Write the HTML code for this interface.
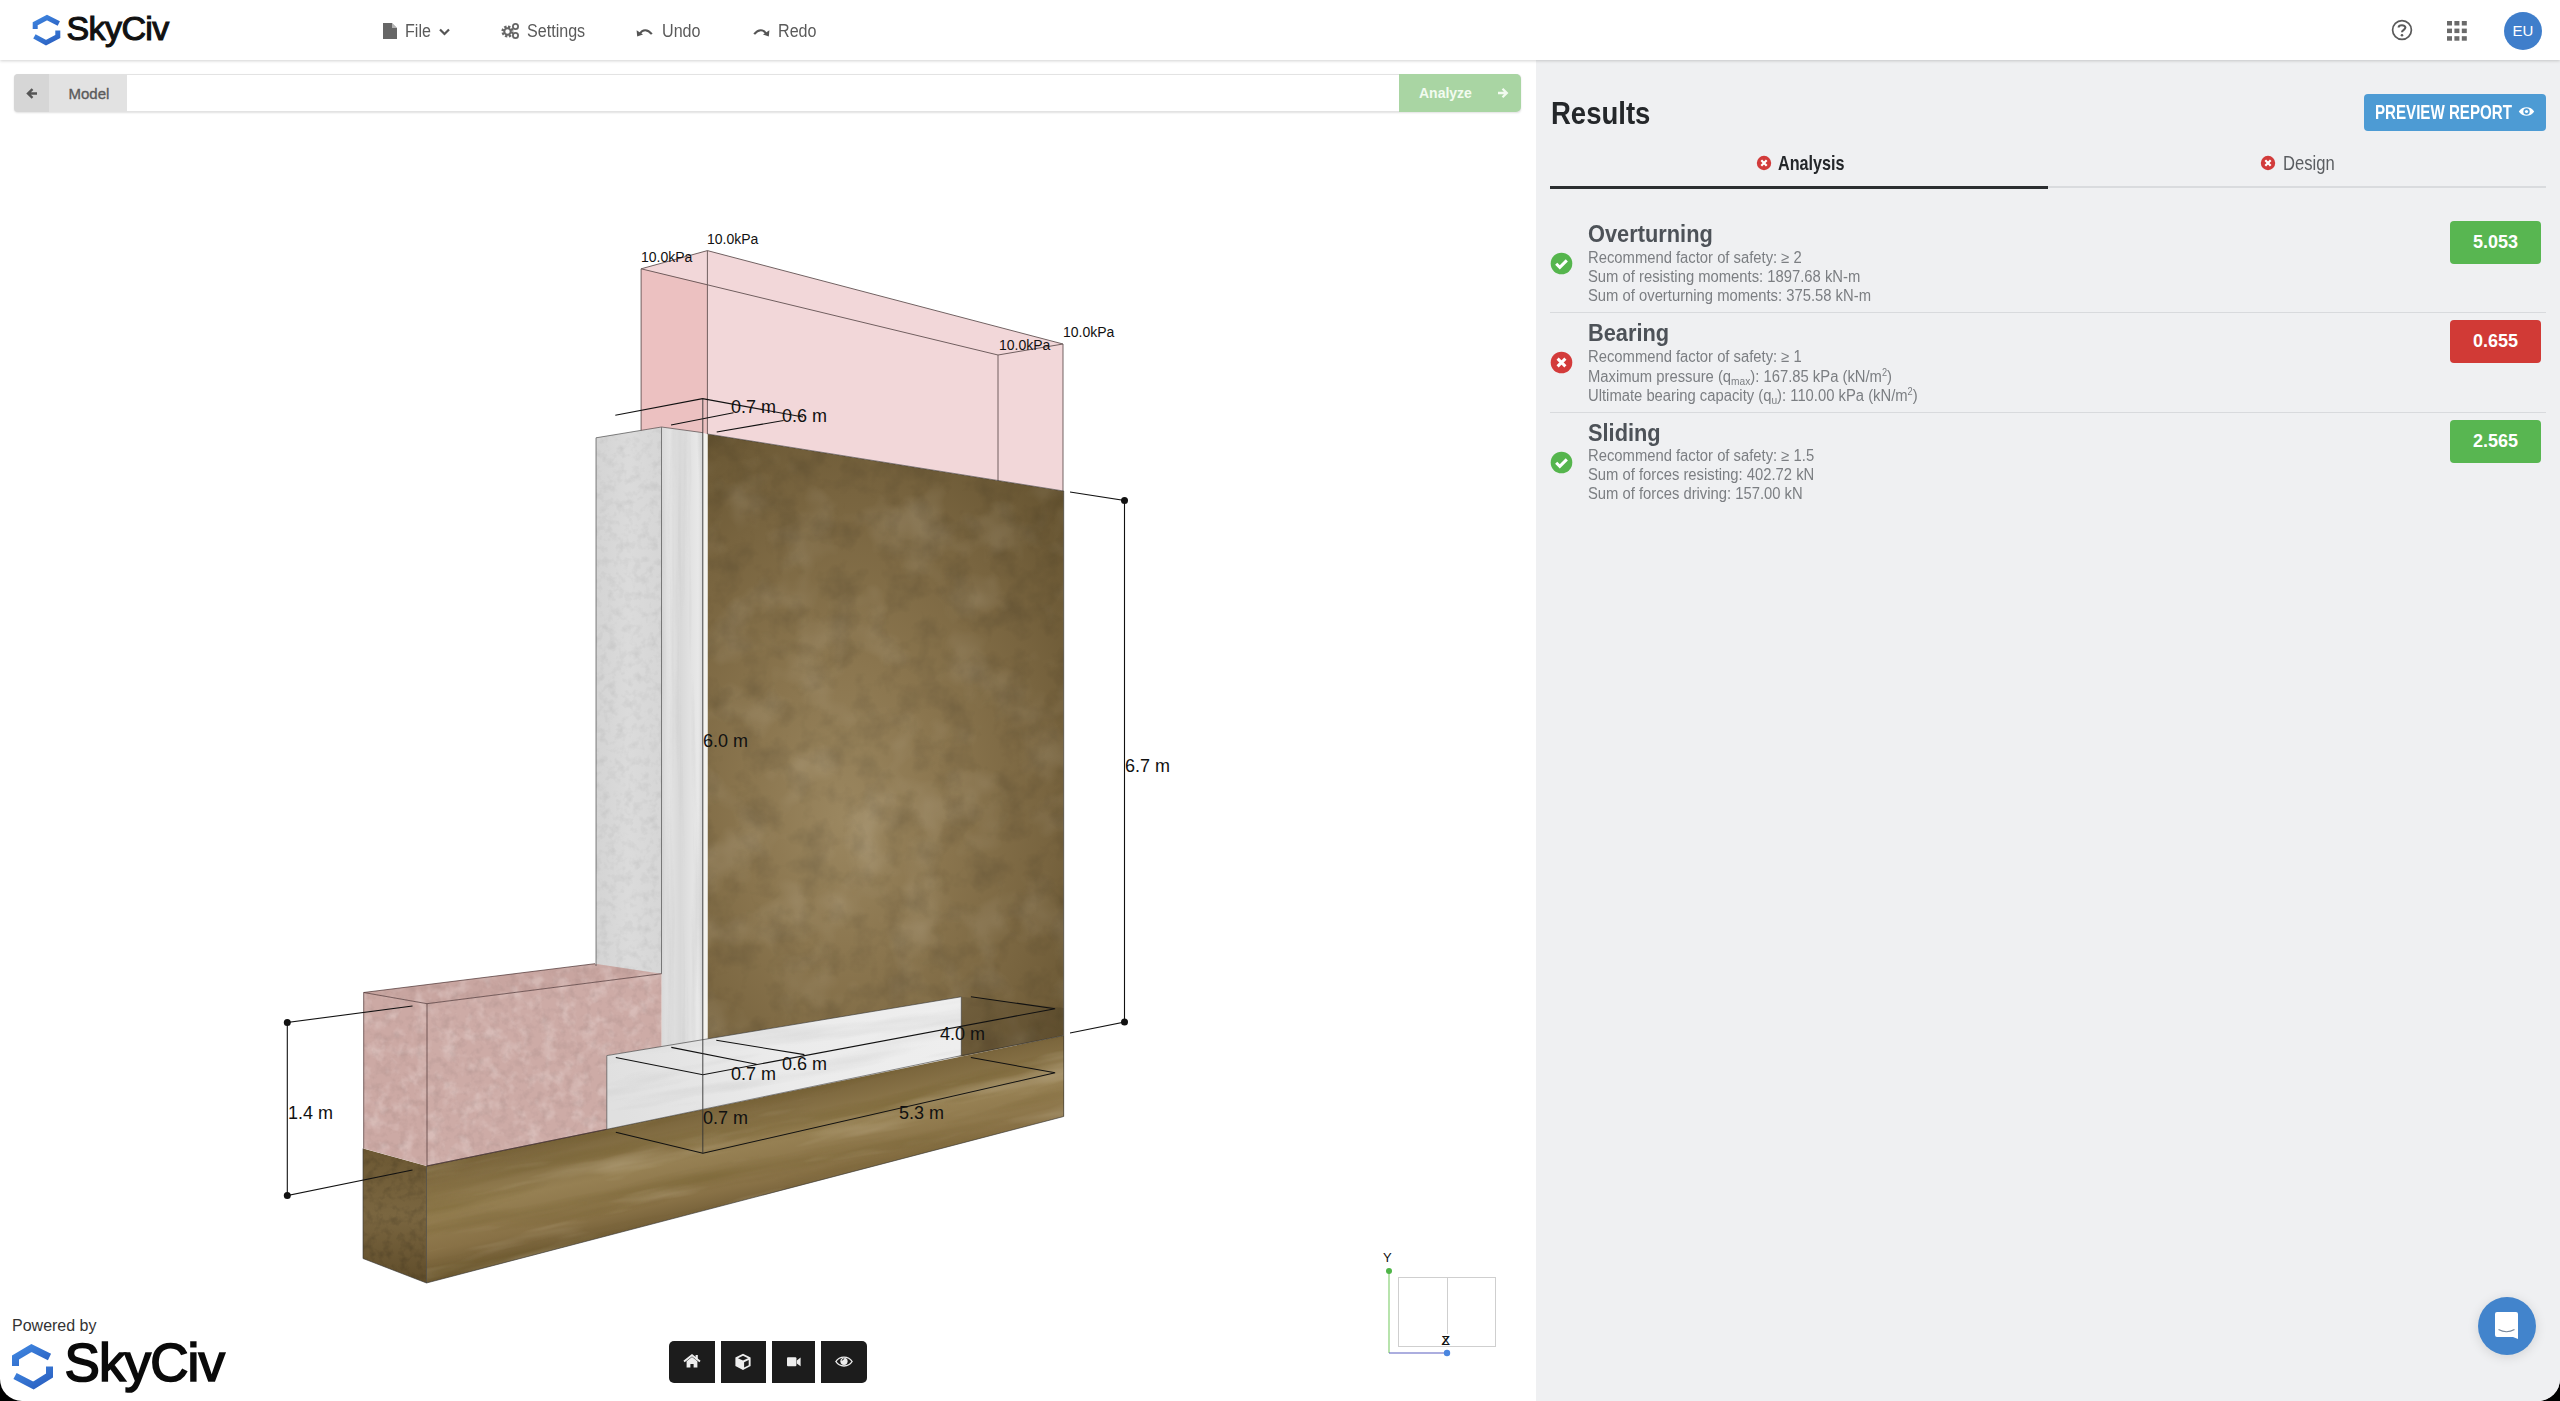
<!DOCTYPE html>
<html><head><meta charset="utf-8">
<style>
*{margin:0;padding:0;box-sizing:border-box}
html,body{width:2560px;height:1401px;overflow:hidden;background:#000}
body{font-family:"Liberation Sans",sans-serif;position:relative}
#app{position:absolute;left:0;top:0;width:2560px;height:1401px;background:linear-gradient(90deg,#fff 1536px,#eff0f2 1536px);border-radius:0 0 22px 22px;overflow:hidden}
.a{position:absolute;white-space:nowrap;line-height:1}
#hdr{position:absolute;left:0;top:0;width:2560px;height:60px;background:#fff;box-shadow:0 1px 3px rgba(0,0,0,.18);z-index:5}
#right{position:absolute;left:1536px;top:60px;width:1024px;height:1341px;background:#eff0f2}
.nav{color:#5a5a5a;font-size:17.5px;transform-origin:0 0;transform:scaleX(0.92)}
.ln{color:#7b7e82;font-size:16px;transform-origin:0 0;transform:scaleX(0.925)}
.ttl{color:#4d5258;font-size:24.5px;font-weight:bold;transform-origin:0 0;transform:scaleX(0.89)}
.badge{position:absolute;left:2450px;width:91px;height:43px;border-radius:4px;color:#fff;font-weight:bold;font-size:18px;text-align:center;line-height:43px}
.sep{position:absolute;left:1550px;width:996px;height:1px;background:#d8dadd}
.sx{transform-origin:0 0}
.tb{position:absolute;top:1341px;height:42px;background:#1c1c1c}
</style></head><body>
<div id="app">

<!-- HEADER -->
<div id="hdr">
  <svg class="a" style="left:30px;top:13px" width="34" height="36" viewBox="30 13 34 36">
    <defs><linearGradient id="lg1" x1="0" y1="0" x2="1" y2="1"><stop offset="0" stop-color="#3f86e0"/><stop offset="1" stop-color="#2a5fc0"/></linearGradient></defs>
    <path d="M35.2,29 V23.8 L47,17.6 L58.8,23.6" fill="none" stroke="url(#lg1)" stroke-width="5"/>
    <path d="M57.8,30.5 V36.4 L46,42.6 L34.4,36.4" fill="none" stroke="url(#lg1)" stroke-width="5"/>
  </svg>
  <div class="a" style="left:66.5px;top:10.5px;font-size:34px;font-weight:normal;color:#111;-webkit-text-stroke:1.1px #111;letter-spacing:-0.6px">SkyCiv</div>

  <svg class="a" style="left:383px;top:23px" width="15" height="16" viewBox="0 0 15 16"><path d="M0,0 H9 L14,5 V16 H0 Z" fill="#666"/><path d="M9,0 V5 H14" fill="#fff" opacity=".5"/></svg>
  <div class="a nav" style="left:405px;top:22.5px">File</div>
  <svg class="a" style="left:439px;top:28px" width="11" height="8" viewBox="0 0 11 8"><path d="M1,1.5 L5.5,6 L10,1.5" fill="none" stroke="#555" stroke-width="2.2"/></svg>

  <svg class="a" style="left:501px;top:22px" width="19" height="17" viewBox="0 0 19 17">
    <circle cx="6.5" cy="9.5" r="4.6" fill="none" stroke="#666" stroke-width="3" stroke-dasharray="2.2 1.4"/>
    <circle cx="6.5" cy="9.5" r="3.2" fill="none" stroke="#666" stroke-width="2"/>
    <circle cx="14.5" cy="4.5" r="2.6" fill="none" stroke="#666" stroke-width="1.8"/>
    <circle cx="14.5" cy="13.5" r="2.6" fill="none" stroke="#666" stroke-width="1.8"/>
  </svg>
  <div class="a nav" style="left:527px;top:22.5px">Settings</div>

  <svg class="a" style="left:636px;top:26px" width="17" height="11" viewBox="0 0 17 11"><path d="M3.6,8 C6.5,3.2 11.5,2.8 15.8,8.2" fill="none" stroke="#555" stroke-width="2.1"/><path d="M0.6,4.2 L1.2,10.4 L7,8.6 Z" fill="#555"/></svg>
  <div class="a nav" style="left:662px;top:22.5px">Undo</div>
  <svg class="a" style="left:753px;top:26px" width="17" height="11" viewBox="0 0 17 11"><path d="M13.4,8 C10.5,3.2 5.5,2.8 1.2,8.2" fill="none" stroke="#555" stroke-width="2.1"/><path d="M16.4,4.2 L15.8,10.4 L10,8.6 Z" fill="#555"/></svg>
  <div class="a nav" style="left:778px;top:22.5px">Redo</div>

  <svg class="a" style="left:2391px;top:19px" width="22" height="22" viewBox="0 0 22 22"><circle cx="11" cy="11" r="9.4" fill="none" stroke="#5a5a5a" stroke-width="1.7"/><path d="M7.6,8.6 C7.6,5.4 14.4,5.4 14.4,8.6 C14.4,10.8 11,10.8 11,13.2" fill="none" stroke="#5a5a5a" stroke-width="2.1"/><circle cx="11" cy="16.2" r="1.3" fill="#5a5a5a"/></svg>
  <svg class="a" style="left:2447px;top:21px" width="20" height="20" viewBox="0 0 20 20" fill="#6a6a6a">
    <rect x="0" y="0" width="5" height="4.5"/><rect x="7.4" y="0" width="5" height="4.5"/><rect x="14.8" y="0" width="5" height="4.5"/>
    <rect x="0" y="7.6" width="5" height="4.5"/><rect x="7.4" y="7.6" width="5" height="4.5"/><rect x="14.8" y="7.6" width="5" height="4.5"/>
    <rect x="0" y="15.2" width="5" height="4.5"/><rect x="7.4" y="15.2" width="5" height="4.5"/><rect x="14.8" y="15.2" width="5" height="4.5"/>
  </svg>
  <div class="a" style="left:2504px;top:11.5px;width:38px;height:38px;border-radius:50%;background:#3f7ecb"></div>
  <div class="a" style="left:2504px;top:23px;width:38px;text-align:center;color:#fff;font-size:15px">EU</div>
</div>

<!-- MODEL BAR -->
<div class="a" style="left:14px;top:74px;width:1507px;height:38px;background:#fff;border:1px solid #e3e3e3;border-radius:4px;box-shadow:0 1px 2px rgba(0,0,0,.12)"></div>
<div class="a" style="left:14px;top:74px;width:35px;height:38px;background:#d6d6d6;border-radius:4px 0 0 4px"></div>
<div class="a" style="left:49px;top:74px;width:78px;height:38px;background:#e2e2e2"></div>
<svg class="a" style="left:26px;top:88px" width="12" height="11" viewBox="0 0 12 11"><path d="M11,5.5 H2.5 M6.5,1.2 L2,5.5 L6.5,9.8" fill="none" stroke="#555" stroke-width="2.4"/></svg>
<div class="a" style="left:68.5px;top:86px;font-size:15px;font-weight:normal;color:#5b5b5b;-webkit-text-stroke:0.35px #5b5b5b">Model</div>
<div class="a" style="left:1399px;top:74px;width:122px;height:38px;background:#a9d5a3;border-radius:0 5px 5px 0"></div>
<div class="a" style="left:1419px;top:86px;font-size:14px;font-weight:bold;color:#f2fbf0">Analyze</div>
<svg class="a" style="left:1497px;top:87px" width="12" height="12" viewBox="0 0 12 12"><path d="M1,6 H9.5 M5.5,1.8 L9.8,6 L5.5,10.2" fill="none" stroke="#f2fbf0" stroke-width="2.3"/></svg>

<!-- RIGHT PANEL -->
<div id="right"></div>
<div class="a sx" style="left:1551px;top:96.5px;font-size:32px;color:#24272a;font-weight:bold;transform:scaleX(0.86)">Results</div>
<div class="a" style="left:2364px;top:94px;width:182px;height:37px;background:#4d9bd4;border-radius:4px"></div>
<div class="a sx" style="left:2375px;top:103px;font-size:19.5px;font-weight:bold;color:#fff;transform:scaleX(0.775)">PREVIEW REPORT</div>
<svg class="a" style="left:2518px;top:105px" width="17" height="13" viewBox="0 0 17 13"><path d="M0.8,6.5 C4,0.8 13,0.8 16.2,6.5 C13,12.2 4,12.2 0.8,6.5 Z" fill="#fff"/><circle cx="8.5" cy="6.5" r="3.2" fill="#4d9bd4"/><circle cx="8.5" cy="6.5" r="1.6" fill="#fff"/></svg>

<svg class="a" style="left:1756px;top:155px" width="16" height="16" viewBox="0 0 16 16"><circle cx="8" cy="8" r="7.2" fill="#d23b3b"/><path d="M5.3,5.3 L10.7,10.7 M10.7,5.3 L5.3,10.7" stroke="#fff" stroke-width="2.2"/></svg>
<div class="a sx" style="left:1778px;top:153px;font-size:20.5px;font-weight:bold;color:#24272a;transform:scaleX(0.79)">Analysis</div>
<svg class="a" style="left:2260px;top:155px" width="16" height="16" viewBox="0 0 16 16"><circle cx="8" cy="8" r="7.2" fill="#d23b3b"/><path d="M5.3,5.3 L10.7,10.7 M10.7,5.3 L5.3,10.7" stroke="#fff" stroke-width="2.2"/></svg>
<div class="a sx" style="left:2283px;top:153px;font-size:20.5px;color:#5a5d61;transform:scaleX(0.81)">Design</div>
<div class="a" style="left:1550px;top:186px;width:498px;height:3px;background:#2b2e31"></div>
<div class="a" style="left:2048px;top:186px;width:498px;height:2px;background:#d9dbde"></div>

<!-- item 1 -->
<svg class="a" style="left:1550px;top:252px" width="23" height="23" viewBox="0 0 23 23"><circle cx="11.5" cy="11.5" r="10.8" fill="#55b54d"/><path d="M6.2,11.8 L9.8,15.4 L16.8,8.4" fill="none" stroke="#fff" stroke-width="3"/></svg>
<div class="a ttl" style="left:1588px;top:222px">Overturning</div>
<div class="a ln" style="left:1588px;top:249.5px">Recommend factor of safety: ≥ 2</div>
<div class="a ln" style="left:1588px;top:268.7px">Sum of resisting moments: 1897.68 kN-m</div>
<div class="a ln" style="left:1588px;top:287.5px">Sum of overturning moments: 375.58 kN-m</div>
<div class="badge" style="top:221px;background:#58b651">5.053</div>
<div class="sep" style="top:312px"></div>

<!-- item 2 -->
<svg class="a" style="left:1550px;top:351px" width="23" height="23" viewBox="0 0 23 23"><circle cx="11.5" cy="11.5" r="10.8" fill="#d33b3b"/><path d="M7.6,7.6 L15.4,15.4 M15.4,7.6 L7.6,15.4" stroke="#fff" stroke-width="3"/></svg>
<div class="a ttl" style="left:1588px;top:321px">Bearing</div>
<div class="a ln" style="left:1588px;top:348.7px">Recommend factor of safety: ≥ 1</div>
<div class="a ln" style="left:1588px;top:367.9px">Maximum pressure (q<sub style="font-size:11px;vertical-align:-3px">max</sub>): 167.85 kPa (kN/m<sup style="font-size:10px;vertical-align:6px">2</sup>)</div>
<div class="a ln" style="left:1588px;top:386.7px">Ultimate bearing capacity (q<sub style="font-size:11px;vertical-align:-3px">u</sub>): 110.00 kPa (kN/m<sup style="font-size:10px;vertical-align:6px">2</sup>)</div>
<div class="badge" style="top:320px;background:#d13a36">0.655</div>
<div class="sep" style="top:412px"></div>

<!-- item 3 -->
<svg class="a" style="left:1550px;top:451px" width="23" height="23" viewBox="0 0 23 23"><circle cx="11.5" cy="11.5" r="10.8" fill="#55b54d"/><path d="M6.2,11.8 L9.8,15.4 L16.8,8.4" fill="none" stroke="#fff" stroke-width="3"/></svg>
<div class="a ttl" style="left:1588px;top:421px">Sliding</div>
<div class="a ln" style="left:1588px;top:447.9px">Recommend factor of safety: ≥ 1.5</div>
<div class="a ln" style="left:1588px;top:466.7px">Sum of forces resisting: 402.72 kN</div>
<div class="a ln" style="left:1588px;top:485.5px">Sum of forces driving: 157.00 kN</div>
<div class="badge" style="top:420px;background:#58b651">2.565</div>

<!-- chat -->
<div class="a" style="left:2478px;top:1297px;width:58px;height:58px;border-radius:50%;background:#4284cc;box-shadow:0 2px 12px rgba(0,0,0,.12)"></div>
<svg class="a" style="left:2494px;top:1311px" width="26" height="30" viewBox="0 0 26 30"><path d="M3,1 H22 Q24,1 24,3 V28 L19,26 H3 Q1,26 1,24 V3 Q1,1 3,1 Z" fill="#fff"/><path d="M4.5,18.5 Q12.5,23 20.5,18.5" fill="none" stroke="#7b8a9c" stroke-width="1.2"/></svg>

<!-- SCENE -->
<svg id="scene" class="a" style="left:0;top:0" width="1536" height="1401" viewBox="0 0 1536 1401">
 <defs>
  <filter id="nDark" x="0" y="0" width="100%" height="100%" filterUnits="objectBoundingBox">
   <feTurbulence type="fractalNoise" baseFrequency="0.035" numOctaves="4" seed="7" result="n"/>
   <feColorMatrix in="n" type="matrix" values="0 0 0 0 0  0 0 0 0 0  0 0 0 0 0  0 0 0 -2.2 1.25" result="a"/>
   <feComposite in="a" in2="SourceGraphic" operator="in"/>
  </filter>
  <filter id="nLight" x="0" y="0" width="100%" height="100%" filterUnits="objectBoundingBox">
   <feTurbulence type="fractalNoise" baseFrequency="0.018" numOctaves="3" seed="21" result="n"/>
   <feColorMatrix in="n" type="matrix" values="0 0 0 0 1  0 0 0 0 0.95  0 0 0 0 0.85  0 0 0 2.6 -1.25" result="a"/>
   <feComposite in="a" in2="SourceGraphic" operator="in"/>
  </filter>
  <filter id="nFine" x="0" y="0" width="100%" height="100%" filterUnits="objectBoundingBox">
   <feTurbulence type="fractalNoise" baseFrequency="0.12" numOctaves="3" seed="4" result="n"/>
   <feColorMatrix in="n" type="matrix" values="0 0 0 0 0  0 0 0 0 0  0 0 0 0 0  0 0 0 -1.8 1.0" result="a"/>
   <feComposite in="a" in2="SourceGraphic" operator="in"/>
  </filter>
  <filter id="nPinkL" x="0" y="0" width="100%" height="100%" filterUnits="objectBoundingBox">
   <feTurbulence type="fractalNoise" baseFrequency="0.07" numOctaves="3" seed="9" result="n"/>
   <feColorMatrix in="n" type="matrix" values="0 0 0 0 1  0 0 0 0 0.96  0 0 0 0 0.95  0 0 0 3 -1.4" result="a"/>
   <feComposite in="a" in2="SourceGraphic" operator="in"/>
  </filter>
  <filter id="nStreak" x="-50%" y="-50%" width="200%" height="200%" filterUnits="objectBoundingBox">
   <feTurbulence type="fractalNoise" baseFrequency="0.004 0.05" numOctaves="4" seed="13" result="n"/>
   <feColorMatrix in="n" type="matrix" values="0 0 0 0 0.15  0 0 0 0 0.1  0 0 0 0 0.02  0 0 0 -2.4 1.3" result="a"/>
   <feComposite in="a" in2="SourceGraphic" operator="in"/>
  </filter>
  <filter id="nStreakL" x="-50%" y="-50%" width="200%" height="200%" filterUnits="objectBoundingBox">
   <feTurbulence type="fractalNoise" baseFrequency="0.005 0.04" numOctaves="4" seed="31" result="n"/>
   <feColorMatrix in="n" type="matrix" values="0 0 0 0 1  0 0 0 0 0.92  0 0 0 0 0.75  0 0 0 2.6 -1.35" result="a"/>
   <feComposite in="a" in2="SourceGraphic" operator="in"/>
  </filter>
  <filter id="nGreyStreak" x="-50%" y="-50%" width="200%" height="200%" filterUnits="objectBoundingBox">
   <feTurbulence type="fractalNoise" baseFrequency="0.006 0.06" numOctaves="3" seed="17" result="n"/>
   <feColorMatrix in="n" type="matrix" values="0 0 0 0 0.4  0 0 0 0 0.4  0 0 0 0 0.4  0 0 0 -2.6 1.35" result="a"/>
   <feComposite in="a" in2="SourceGraphic" operator="in"/>
  </filter>
  <filter id="nGreyStreakV" x="-50%" y="-50%" width="200%" height="200%" filterUnits="objectBoundingBox">
   <feTurbulence type="fractalNoise" baseFrequency="0.12 0.004" numOctaves="3" seed="23" result="n"/>
   <feColorMatrix in="n" type="matrix" values="0 0 0 0 0.4  0 0 0 0 0.4  0 0 0 0 0.4  0 0 0 -2.6 1.35" result="a"/>
   <feComposite in="a" in2="SourceGraphic" operator="in"/>
  </filter>
  <clipPath id="cpFoot"><polygon points="606.8,1055.6 961.3,996.8 961.3,1055.6 606.8,1129.3"/></clipPath>
  <clipPath id="cpStemF"><polygon points="661.5,427 703,432.7 703,1040 661.5,1047"/></clipPath>
  <clipPath id="cpBase"><polygon points="426.5,1166 1064,1035.5 1064,1116.5 426.5,1283"/></clipPath>
  <radialGradient id="gSoil" gradientUnits="userSpaceOnUse" cx="850" cy="790" r="440" fx="840" fy="820" gradientTransform="translate(850 790) scale(0.66 1) translate(-850 -790)">
   <stop offset="0" stop-color="#9b8760"/>
   <stop offset="0.35" stop-color="#8a754e"/>
   <stop offset="0.7" stop-color="#78643f"/>
   <stop offset="1" stop-color="#655330"/>
  </radialGradient>
  <linearGradient id="gBase" gradientUnits="userSpaceOnUse" x1="712" y1="1105" x2="737" y2="1225">
   <stop offset="0" stop-color="#78633a"/>
   <stop offset="0.4" stop-color="#968053"/>
   <stop offset="0.7" stop-color="#887146"/>
   <stop offset="1" stop-color="#63502b"/>
  </linearGradient>
  <linearGradient id="gBaseL" x1="0" y1="0" x2="0" y2="1">
   <stop offset="0" stop-color="#6c5833"/><stop offset="0.5" stop-color="#7a6640"/><stop offset="1" stop-color="#5f4c2a"/>
  </linearGradient>
  <linearGradient id="gStemF" x1="0" y1="0" x2="1" y2="0">
   <stop offset="0" stop-color="#d9d9d9"/><stop offset="0.2" stop-color="#e3e3e3"/><stop offset="0.45" stop-color="#d8d8d8"/><stop offset="0.7" stop-color="#e2e2e2"/><stop offset="0.88" stop-color="#e8e8e8"/><stop offset="1" stop-color="#dadada"/>
  </linearGradient>
  <linearGradient id="gStemL" x1="0" y1="0" x2="1" y2="0">
   <stop offset="0" stop-color="#d4d4d4"/><stop offset="0.5" stop-color="#dbdbdb"/><stop offset="1" stop-color="#d6d6d6"/>
  </linearGradient>
  <linearGradient id="gFoot" gradientUnits="userSpaceOnUse" x1="620" y1="1110" x2="940" y2="1000">
   <stop offset="0" stop-color="#e0e0e0"/><stop offset="0.5" stop-color="#ebebeb"/><stop offset="1" stop-color="#eeeeee"/>
  </linearGradient>
 </defs>

 <!-- foundation soil base -->
 <polygon points="363,1148.5 426.5,1166 426.5,1283 363,1258.5" fill="url(#gBaseL)"/>
 <polygon points="363,1148.5 426.5,1166 426.5,1283 363,1258.5" fill="#000" opacity="0.18" filter="url(#nFine)"/>
 <polygon points="426.5,1166 1064,1035.5 1064,1116.5 426.5,1283" fill="url(#gBase)"/>
 <g clip-path="url(#cpBase)">
  <g transform="rotate(-11.6 745 1160)">
   <rect x="380" y="1060" width="740" height="220" fill="#000" opacity="0.35" filter="url(#nStreak)"/>
   <rect x="380" y="1060" width="740" height="220" fill="#fff" opacity="0.28" filter="url(#nStreakL)"/>
  </g>
 </g>

 <!-- retained soil -->
 <polygon points="707.5,434 1063.7,491 1063.7,1035.5 961.3,1056.5 707.5,1040" fill="url(#gSoil)"/>
 <polygon points="707.5,434 1063.7,491 1063.7,1035.5 961.3,1056.5 707.5,1040" fill="#fff" opacity="0.13" filter="url(#nLight)"/>
 <polygon points="707.5,434 1063.7,491 1063.7,1035.5 961.3,1056.5 707.5,1040" fill="#000" opacity="0.10" filter="url(#nDark)"/>
 <polygon points="961.3,996.8 1063.7,1008 1063.7,1035.5 961.3,1056.5" fill="#000" opacity="0.1"/>

 <!-- stem left face -->
 <polygon points="596,437.8 661.5,427 661.5,975 596,966" fill="url(#gStemL)"/>
 <polygon points="596,437.8 661.5,427 661.5,975 596,966" fill="#000" opacity="0.07" filter="url(#nFine)"/>
 <!-- stem front face -->
 <polygon points="661.5,427 703,432.7 703,1040 661.5,1047" fill="url(#gStemF)"/>
 <g clip-path="url(#cpStemF)"><rect x="650" y="420" width="60" height="640" fill="#000" opacity="0.2" filter="url(#nGreyStreakV)"/></g>
 <polygon points="703,432.7 707.5,434 707.5,1039 703,1040" fill="#f4f3ef"/>

 <!-- toe soil pink -->
 <polygon points="363.7,992.5 595,963.7 661.5,973.7 427,1003.7" fill="#c8a5a0"/>
 <polygon points="363.7,992.5 427,1003.7 427,1166 363.7,1148.5" fill="#cca9a4"/>
 <polygon points="427,1003.7 661.5,973.7 661.5,1047 606.8,1055.6 606.8,1129.3 427,1166" fill="#cdaba6"/>
 <polygon points="363.7,992.5 595,963.7 661.5,973.7 661.5,1047 606.8,1055.6 606.8,1129.3 427,1166 363.7,1148.5" fill="#fff" opacity="0.22" filter="url(#nPinkL)"/>
 <polygon points="363.7,992.5 595,963.7 661.5,973.7 661.5,1047 606.8,1055.6 606.8,1129.3 427,1166 363.7,1148.5" fill="#6a3a38" opacity="0.08" filter="url(#nFine)"/>

 <!-- footing -->
 <polygon points="606.8,1055.6 961.3,996.8 961.3,1055.6 606.8,1129.3" fill="url(#gFoot)"/>
 <g clip-path="url(#cpFoot)"><g transform="rotate(-10 780 1060)"><rect x="580" y="960" width="420" height="200" fill="#000" opacity="0.22" filter="url(#nGreyStreak)"/></g></g>

 <!-- load box -->
 <polygon points="641.1,268.8 707.4,250.6 1063,344 1063,491 707.5,434 703,432.7 661.5,427 641.1,430.4" fill="#f2d7d9"/>
 <polygon points="641.1,268.8 707.4,284.3 707.4,434 703,432.7 661.5,427 641.1,430.4" fill="#ecc1c1"/>

 <!-- edges -->
 <g fill="none" stroke="#5a4a4a" stroke-width="1" opacity="0.85">
  <path d="M641.1,268.8 L707.4,250.6 L1063,344 L998,355 L641.1,268.8"/>
  <path d="M641.1,268.8 V430.4 M707.4,250.6 V434 M998,355 V481 M1063,344 V491"/>
 </g>
 <g fill="none" stroke="#333" stroke-width="1" opacity="0.6">
  <path d="M596,437.8 L661.5,427 L703,432.7 M596,437.8 V966 M661.5,427 V973.7"/>
  <path d="M707.5,434 L1063.7,491 V1116.5 L426.5,1283 L363,1258.5 V1148.5 M426.5,1166 V1283"/>
  
  <path d="M426.5,1166 L606.8,1129.3 M961.3,1055.6 L1064,1035.5 M606.8,1055.6 V1129.3 L961.3,1055.6 V996.8 L606.8,1055.6"/>
 </g>

 <path d="M363.7,992.5 L595,963.7 M363.7,992.5 L427,1003.7 L661.5,973.7 M427,1003.7 V1166 M363.7,992.5 V1148.5 M427,1166 L606.8,1129.3" fill="none" stroke="#4a3030" stroke-width="1" opacity="0.7"/>
 <!-- dimension lines -->
 <g fill="none" stroke="#111" stroke-width="1.1">
  <path d="M615.3,415.3 L702.6,398.6 L803,417"/>
  
  <path d="M671,425 L733.5,412.8 M716.7,432 L783.6,420.5"/>
  <path d="M615.8,1057.5 L702.9,1074.7 L1055.1,1008.7 L970.9,996.8 M671.3,1047.4 L756.5,1064.2 M716.3,1040.3 L804.4,1054.6"/>
  <path d="M615.8,1132.2 L702.9,1153.2 L1055.1,1072.8 L970.9,1057.5"/>
  <path d="M1070,492 L1124.5,500.5 V1022 L1070,1033"/>
  <path d="M412.5,1006 L287.3,1022.5 V1195.5 L412.5,1170"/>
 </g>
 <g fill="#111">
  <circle cx="1124.5" cy="500.5" r="3.5"/><circle cx="1124.5" cy="1022" r="3.5"/>
  <circle cx="287.3" cy="1022.5" r="3.5"/><circle cx="287.3" cy="1195.5" r="3.5"/>
 </g>

 <path d="M702.8,398.6 V1153.2" fill="none" stroke="#333" stroke-width="0.9"/>
 <!-- labels -->
 <g font-family="Liberation Sans, sans-serif" fill="#111">
  <text x="707" y="244" font-size="14">10.0kPa</text>
  <text x="641" y="262" font-size="14">10.0kPa</text>
  <text x="1063" y="337" font-size="14">10.0kPa</text>
  <text x="999" y="350" font-size="14">10.0kPa</text>
  <text x="731" y="413" font-size="18">0.7 m</text>
  <text x="782" y="422" font-size="18">0.6 m</text>
  <text x="703" y="747" font-size="18">6.0 m</text>
  <text x="1125" y="772" font-size="18">6.7 m</text>
  <text x="288" y="1119" font-size="18">1.4 m</text>
  <text x="731" y="1079.5" font-size="18">0.7 m</text>
  <text x="782" y="1070" font-size="18">0.6 m</text>
  <text x="940" y="1040.3" font-size="18">4.0 m</text>
  <text x="703" y="1123.6" font-size="18">0.7 m</text>
  <text x="899" y="1119" font-size="18">5.3 m</text>
 </g>
</svg>

<!-- bottom left -->
<div class="a" style="left:12px;top:1318px;font-size:16px;color:#333">Powered by</div>
<svg class="a" style="left:8px;top:1340px" width="50" height="52" viewBox="8 1340 50 52">
  <defs><linearGradient id="lg2" x1="0" y1="0" x2="1" y2="1"><stop offset="0" stop-color="#3f86e0"/><stop offset="1" stop-color="#2a5fc0"/></linearGradient></defs>
  <path d="M15.5,1366 V1357.5 L31.5,1348 L49.5,1357" fill="none" stroke="url(#lg2)" stroke-width="7"/>
  <path d="M49.5,1366.5 V1375.5 L33.5,1385.5 L15,1376" fill="none" stroke="url(#lg2)" stroke-width="7"/>
</svg>
<div class="a" style="left:64.5px;top:1336px;font-size:53px;font-weight:normal;color:#0a0a0a;-webkit-text-stroke:1.7px #0a0a0a;letter-spacing:-0.9px">SkyCiv</div>

<!-- toolbar -->
<div class="tb" style="left:669px;width:46px;border-radius:5px 0 0 5px"></div>
<div class="tb" style="left:721px;width:45px"></div>
<div class="tb" style="left:772px;width:43px"></div>
<div class="tb" style="left:821px;width:46px;border-radius:0 5px 5px 0"></div>
<svg class="a" style="left:683px;top:1354px" width="18" height="15" viewBox="0 0 18 15">
  <path d="M1,7.6 L9,1.2 L17,7.6" fill="none" stroke="#eee" stroke-width="1.9"/>
  <rect x="12.6" y="1" width="2.2" height="4.6" fill="#eee"/>
  <path d="M3.6,7.2 L9,2.9 L14.4,7.2 V13.6 H10.6 V10 H7.4 V13.6 H3.6 Z" fill="#eee"/>
</svg>
<svg class="a" style="left:734px;top:1353px" width="18" height="18" viewBox="0 0 18 18">
  <path d="M9,0.8 L16.6,4.6 V13 L9,17 L1.4,13 V4.6 Z" fill="#eee"/>
  <path d="M9,2.8 L14,5.2 L9,7.6 L4,5.2 Z" fill="#1c1c1c"/>
  <path d="M10.1,9.3 L14.7,7 V12.2 L10.1,14.6 Z" fill="#1c1c1c"/>
</svg>
<svg class="a" style="left:787px;top:1357px" width="14" height="10" viewBox="0 0 14 10">
  <rect x="0" y="0.3" width="9.4" height="9" rx="1" fill="#eee"/>
  <path d="M9.8,3.4 L13.6,0.6 V9.2 L9.8,6.4 Z" fill="#eee"/>
</svg>
<svg class="a" style="left:835px;top:1355px" width="18" height="13" viewBox="0 0 18 13">
  <path d="M0.9,6.5 C4.5,0.6 13.5,0.6 17.1,6.5 C13.5,12.4 4.5,12.4 0.9,6.5 Z" fill="none" stroke="#eee" stroke-width="1.4"/>
  <circle cx="9" cy="6.3" r="3.6" fill="#eee"/>
  <path d="M7.2,5.6 A2,2 0 0 1 9.2,3.8" fill="none" stroke="#1c1c1c" stroke-width="1"/>
</svg>

<!-- axes -->
<svg class="a" style="left:1370px;top:1245px" width="140" height="120" viewBox="1370 1245 140 120">
  <rect x="1398.5" y="1277.5" width="97" height="69" fill="none" stroke="#cfcfcf" stroke-width="1"/>
  <line x1="1447.5" y1="1277.5" x2="1447.5" y2="1334" stroke="#cfcfcf"/>
  <line x1="1389" y1="1271" x2="1389" y2="1353" stroke="#9ad88a" stroke-width="1.4"/>
  <line x1="1389" y1="1353" x2="1447" y2="1353" stroke="#5a5fc0" stroke-width="1.2"/>
  <circle cx="1389" cy="1271" r="3" fill="#4fb548"/>
  <circle cx="1447" cy="1353" r="3.2" fill="#4a86e0"/>
</svg>
<div class="a" style="left:1383px;top:1251px;font-size:13px;color:#111">Y</div>
<div class="a" style="left:1441.5px;top:1334px;font-size:13px;color:#111">X</div><div class="a" style="left:1441.5px;top:1334px;font-size:13px;color:#111">Z</div>

</div>
</body></html>
